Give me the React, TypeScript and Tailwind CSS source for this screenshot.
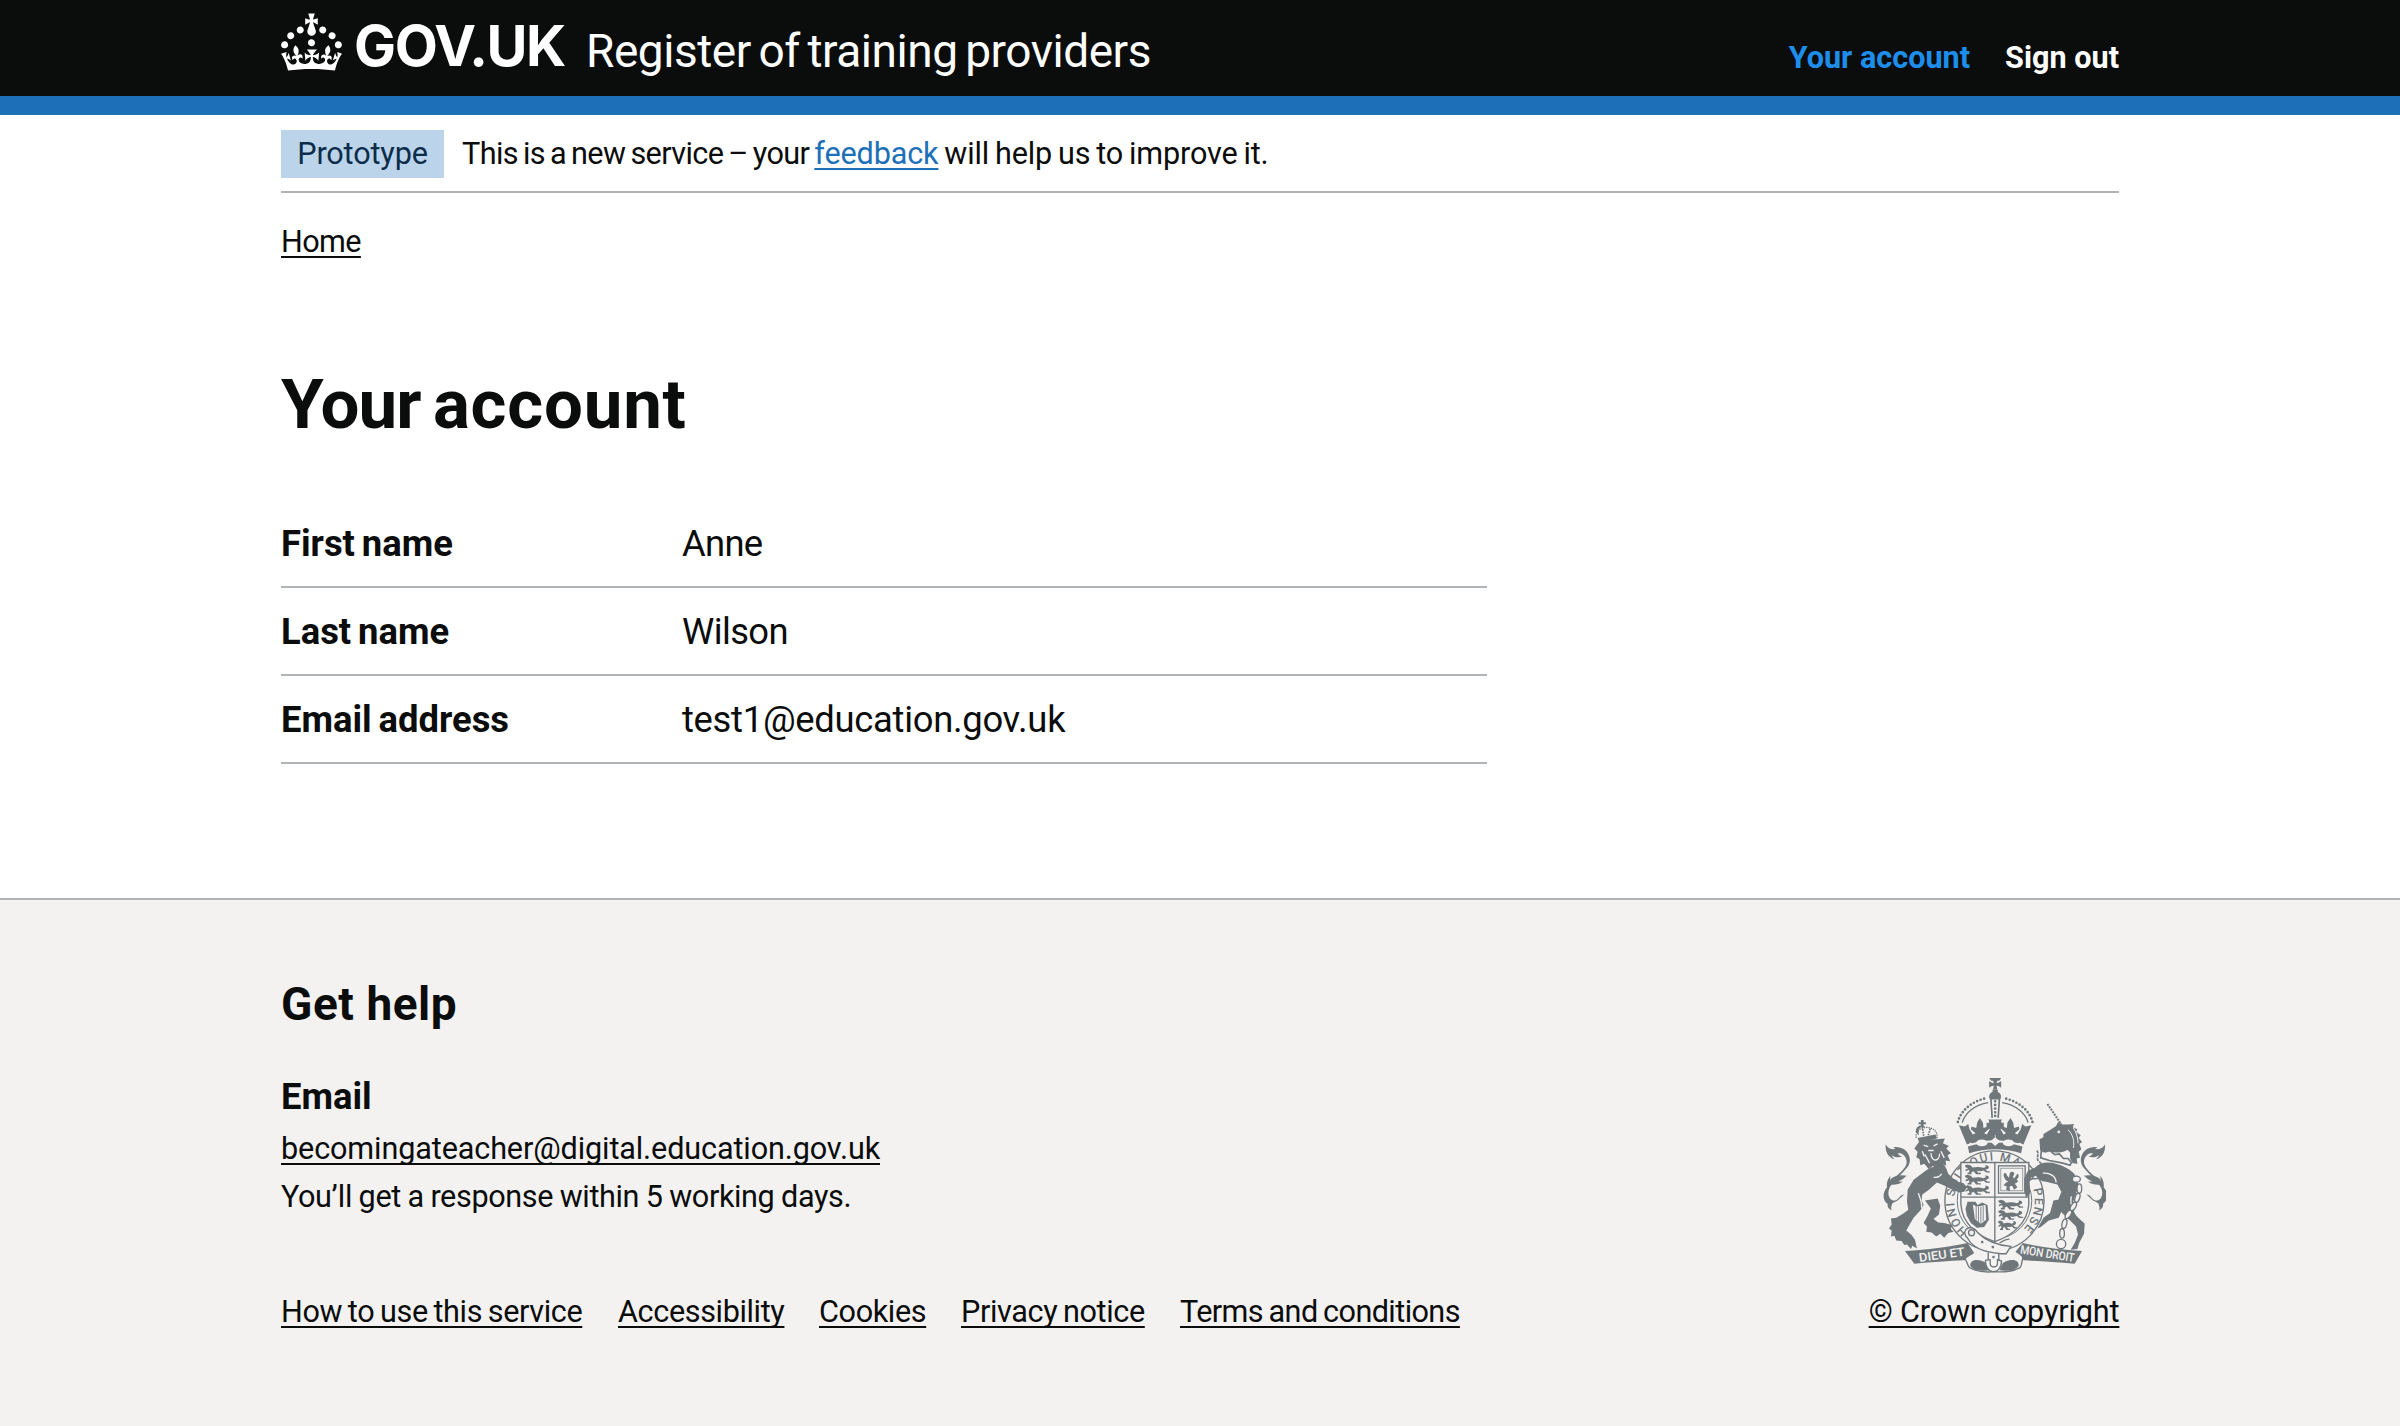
import type { ReactNode } from "react";

const ROWS = [
  { label: "First name", value: "Anne", tracking: "tracking-[-0.02em]" },
  { label: "Last name", value: "Wilson", tracking: "tracking-[-0.017em]" },
  { label: "Email address", value: "test1@education.gov.uk", tracking: "tracking-[-0.008em]" },
];

const FOOTER_LINKS = [
  { text: "How to use this service", width: "w-[302px]" },
  { text: "Accessibility", width: "w-[166px]" },
  { text: "Cookies", width: "w-[107px]" },
  { text: "Privacy notice", width: "w-[184px]" },
  { text: "Terms and conditions", width: "w-[280px] tracking-[-0.019em]" },
];

function Link({ children, className = "" }: { children: ReactNode; className?: string }) {
  return (
    <a
      href="#"
      className={`underline decoration-2 underline-offset-[4px] [text-decoration-skip-ink:none] ${className}`}
    >
      {children}
    </a>
  );
}

function CrownLogo() {
  return (
    <svg viewBox="0 0 32 30" className="mt-[13px] h-[58px] w-[61px] shrink-0" fill="currentColor" aria-hidden="true">
      <path d="M22.6 10.4c-1 .4-2-.1-2.4-1-.4-.9.1-2 1-2.4.9-.4 2 .1 2.4 1s-.1 2-1 2.4m-5.9 6.7c-.9.4-2-.1-2.4-1-.4-.9.1-2 1-2.4.9-.4 2 .1 2.4 1s-.1 2-1 2.4m10.8-3.7c-1 .4-2-.1-2.4-1-.4-.9.1-2 1-2.4.9-.4 2 .1 2.4 1s0 2-1 2.4m3.3 4.8c-1 .4-2-.1-2.4-1-.4-.9.1-2 1-2.4.9-.4 2 .1 2.4 1s-.1 2-1 2.4M17 4.7l2.3 1.2V2.5l-2.3.7-.2-.2.9-3h-3.4l.9 3-.2.2c-.1.1-2.3-.7-2.3-.7v3.4L15 4.7c.1.1.1.2.2.2l-1.3 4c-.1.2-.1.4-.1.6 0 1.1.8 2 1.9 2.2h.7c1-.2 1.9-1.1 1.9-2.1 0-.2 0-.4-.1-.6l-1.3-4c-.1-.2 0-.2.1-.3m-7.6 5.7c.9.4 2-.1 2.4-1 .4-.9-.1-2-1-2.4-.9-.4-2 .1-2.4 1s0 2 1 2.4m-5 3c.9.4 2-.1 2.4-1 .4-.9-.1-2-1-2.4-.9-.4-2 .1-2.4 1s.1 2 1 2.4m-3.2 4.8c.9.4 2-.1 2.4-1 .4-.9-.1-2-1-2.4-.9-.4-2 .1-2.4 1s0 2 1 2.4m14.8 11c4.4 0 8.6.3 12.3.8 1.1-4.5 2.4-7 3.7-8.8l-2.5-.9c.2 1.3.3 1.9 0 2.7-.4-.4-.8-1.1-1.1-2.3l-1.2 4c.7-.5 1.3-.8 2-.9-1.1 2.5-2.6 3.1-3.5 3-1.1-.2-1.7-1.2-1.5-2.1.3-1.2 1.5-1.5 2.1-.1 1.1-2.3-.8-3-2-2.3 1.9-1.9 2.1-3.5.6-5.6-2.1 1.6-2.1 3.2-1.2 5.5-1.2-1.4-3.2-.6-2.5 1.6.9-1.4 2.1-.5 1.9.8-.2 1.1-1.7 2.1-3.5 1.9-2.7-.2-2.9-2.1-2.9-3.6.7-.1 1.9.5 2.9 1.9l.4-4.3c-1.1 1.1-2.1 1.4-3.2 1.4.4-1.2 2.1-3 2.1-3h-5.4s1.7 1.9 2.1 3c-1.1 0-2.1-.2-3.2-1.4l.4 4.3c1-1.4 2.2-2 2.9-1.9-.1 1.5-.2 3.4-2.9 3.6-1.9.2-3.4-.8-3.5-1.9-.2-1.3 1-2.2 1.9-.8.7-2.3-1.2-3-2.5-1.6.9-2.2.9-3.9-1.2-5.5-1.5 2-1.3 3.7.6 5.6-1.2-.7-3.1 0-2 2.3.6-1.4 1.8-1.1 2.1.1.2.9-.3 1.9-1.5 2.1-.9.2-2.4-.5-3.5-3 .6 0 1.2.3 2 .9l-1.2-4c-.3 1.1-.7 1.9-1.1 2.3-.3-.8-.2-1.4 0-2.7l-2.9.9C1.3 23 2.6 25.5 3.7 30c3.7-.5 7.9-.8 12.3-.8" />
    </svg>
  );
}

/* One walking lion of the English quarters, 80 by 28 units. */
function PassantLion({ x, y }: { x: number; y: number }) {
  return (
    <path
      transform={`translate(${x} ${y})`}
      d="M2 3l8-3 10 3 5 6c12-3 24-2 32 1 8-1 9-5 6-8 8 0 14 4 10 9-3 3-8 4-10 5l8 4 6 0v4H66l-8-6c-8 3-14 2-20 1l4 6h8v4H36l-8-9-6 3v6H10v-4l6-2-2-7-10 4 0-5 8-4-8-3z"
      fill="currentColor"
    />
  );
}

/* Parts of the crown that sit left of the centre line; drawn twice, once mirrored. */
function CrownHalf() {
  return (
    <g>
      <path d="M295 184C303 150 340 120 380 113" fill="none" stroke="currentColor" strokeWidth="8" strokeLinecap="round" strokeDasharray="0 11" />
      <path d="M308 186C316 158 346 132 386 126" fill="none" stroke="currentColor" strokeWidth="4" />
      <path d="M394 112L398 172" stroke="currentColor" strokeWidth="5" />
      <path d="M298 194l18 4 10-8 4 16 10 16 8-4-14-12 2-8 14 4 3-16 8-14 9 14 2 16 13-4 2 8-13 12 8 4 10-18-8-12 8-14h14v60c-32 2-60 6-84 14z" fill="currentColor" />
      <path d="M324 252l10-6 8 8-10 8z" fill="#f3f2f1" />
    </g>
  );
}

function Limbs() {
  return (
    <g fill="currentColor">
      {/* tail */}
      <path d="M78 252c8 14 20 16 30 12l-8-4c14-2 30 2 38 10 14 14 18 34 4 52-16 20-46 44-54 64-6 20 4 36 18 34 12-2 14-18 28-18l-20 18-16 8c-2 8-6 14-2 22-10-4-14-12-12-20-16-10-16-34-2-50-2-12 2-24 10-34 0 6-2 12 0 18 18-20 40-32 48-52 4-14-4-30-18-34l-8 0c4 6 8 8 14 10-12 4-24 2-32-4 2 6 6 8 8 12-14-4-28-18-26-44z" />
      <path d="M92 356c12-10 30-14 50-10-10 6-14 14-26 16 6 2 10 2 14 0-10 10-28 12-40 10z" />
    </g>
  );
}

function RoyalArms() {
  return (
    <svg viewBox="70 50 670 590" className="h-[197px] w-[223px] text-[#6f777b]" aria-hidden="true">
      <defs>
        <path id="garter" d="M326 513A121 121 0 1 1 484 513" />
      </defs>

      {/* garter */}
      <ellipse cx="405" cy="421" rx="149" ry="150" fill="#f3f2f1" stroke="currentColor" strokeWidth="4" />
      <ellipse cx="405" cy="421" rx="112" ry="114" fill="none" stroke="currentColor" strokeWidth="3" />
      <text fill="currentColor" fontSize="36" fontFamily="Roboto, sans-serif" fontWeight="500">
        <textPath href="#garter" textLength="575">HONI SOIT QUI MAL Y PENSE</textPath>
      </text>

      {/* crown */}
      <CrownHalf />
      <g transform="matrix(-1 0 0 1 814 0)">
        <CrownHalf />
      </g>
      <path d="M389 52h36l-6 8h-5l-3 7 6-1 8-5v20l-8-5-6-1 3 12h-14l3-12-6 1-8 5V61l8 5 6 1-3-7h-5z" fill="currentColor" />
      <path d="M398 88h18l-2 5c14 6 12 20 6 24h-27c-6-6-7-18 7-24z" fill="currentColor" />
      <path d="M407 122v50" stroke="currentColor" strokeWidth="8" strokeLinecap="round" strokeDasharray="0 11" />
      <path d="M386 177h42l-9 14 14-5v22l-15-5-4 20h-14l-4-20-15 5v-22l14 5z" fill="currentColor" />
      <path d="M325 258c50-16 114-16 164 0l-4 20c-50-16-106-16-156 0z" fill="currentColor" />
      <ellipse cx="367" cy="247" rx="17" ry="10" fill="#f3f2f1" />
      <ellipse cx="447" cy="247" rx="17" ry="10" fill="#f3f2f1" />
      <path d="M407 230l15 13-15 13-15-13z" fill="#f3f2f1" />

      {/* shield */}
      <path d="M304 306h204v126c-4 54-46 92-102 112-58-20-98-58-102-112z" fill="#f3f2f1" stroke="currentColor" strokeWidth="4" />
      <path d="M406 306v238M304 410h204" stroke="currentColor" strokeWidth="4" />
      <PassantLion x={314} y={312} />
      <PassantLion x={314} y={343} />
      <PassantLion x={314} y={374} />
      <PassantLion x={414} y={418} />
      <PassantLion x={414} y={449} />
      <g transform="translate(414 480) scale(0.75 1)">
        <PassantLion x={0} y={0} />
      </g>
      <rect x="417" y="316" width="80" height="82" fill="none" stroke="currentColor" strokeWidth="4" />
      <rect x="424" y="323" width="66" height="68" fill="none" stroke="currentColor" strokeWidth="2" />
      <path d="M434 350c-6-12 6-18 8-6l6 8c4-8 0-18 10-18 8 0 8 10 2 14l4 6 10-14c6 4 4 12-2 16l4 8-10 6 8 10-10 8-6-12-8 2 2 14-12-4 2-10-10-4 8-8 6-2-8-6z" fill="currentColor" />
      <path d="M324 424h24l6 10 14-8 16 8 4 44-14 22-22 2-18-14-12-22-4-20z" fill="currentColor" />
      <path d="M340 432c14 10 26 4 38 2l2 44-16 12-18-14z" fill="#f3f2f1" />
      <path d="M350 436v42M357 438v46M364 438v50M371 436v46" stroke="currentColor" strokeWidth="2.5" />

      {/* tails */}
      <Limbs />
      <g transform="matrix(-1 0 0 1 815 0)">
        <Limbs />
      </g>

      {/* lion */}
      <g fill="currentColor">
        <path d="M222 318l20-12c12 2 18 16 24 34l24 22 22 6 10 12-8 14-14 2-22-8-26-14-20-8-24 22-20 14-2 18 6 14-10 16-20 22-14 24-8 14 16 14 10 14 6 26-14-8-4 10-12-14-8 2-8-12-16-2-6-14-10 2 2-18-8-6 8-12-2-18 16-2 20-12 16-12-4-24 2-36 18-30 40-30z" />
        <path d="M196 420l38-6 8 22-4 26-16 14 14 10 18 2 24 6-4 12 8 8-16 4-12 14-12-12-12 8-14-12-16-2 2-16-10-10 12-22 10-22z" />
        <path d="M178 244l14-8h40l24-2-6 14 18 8-8 8 14 14-10 6 8 18-14-2 2 16-16-8-10 14-14-6-12 10-14-16-12 4-2-18-10-6 4-16-10-10z" />
        <path d="M168 214c2-20 16-24 30-14l-10-1c-12 2-12 10-10 26zM174 232l54-10 4 12-54 10zM184 178h8v7h7v6h-7v9h-8v-9h-7v-6h7z" />
      </g>
      <path d="M170 232c-6-34 50-44 62-12v12" fill="none" stroke="currentColor" strokeWidth="4" strokeDasharray="4 3" />
      <path d="M188 198l4 28M212 204l-6 20" stroke="currentColor" strokeWidth="5" strokeDasharray="5 3" />
      <path d="M192 254l14 4M222 256l12-6M206 270h16M214 278c2 30 26 24 26 2M196 282l14 26M188 272l6 16M244 272l10 20" fill="none" stroke="#f3f2f1" strokeWidth="4" />
      <path d="M176 398c6 16 12 30 10 44M246 340c-4 10-18 12-24 10" fill="none" stroke="#f3f2f1" strokeWidth="4" />

      {/* unicorn */}
      <g fill="currentColor">
        <path d="M564 130l42 62" stroke="currentColor" strokeWidth="6" strokeDasharray="6 3" />
        <path d="M540 236l12-6 0-10 20-12 18-12 6-12 12 8 18 0 18-2-4 10 14 6-4 8 14 10-6 8 10 12-8 6 6 16-8 8 4 18-10 2 2 16-14-2-8-14 0-18-8-8c-16 12-36 8-56 4l-16 4-10-8z" />
        <path d="M546 264l12 10 14-4 14 12 14-2 12 14 14 0 10 12-4 8-22-6-40-8-26-8z" fill="none" stroke="currentColor" strokeWidth="5" />
        <path d="M526 322c22-24 60-18 94 0 34 18 40 40 34 66-8 26-18 38-10 66 6 16 24 26 32 36l-2 30-14 26-6 20-20 2 12-20 10-26-6-24-24-24-18-16c-10-14-14-26-10-44l8-20-12-22-34-8c-14 0-24-8-30-18l-14 4-6 14 2 34-12 14-6-22 0-36 12-24z" />
        <path d="M582 420l34-6-6 30-12 28-30 8-24 20-10 4 18-32 20-14z" />
      </g>
      <path d="M550 338c20-2 40 8 40 28M560 396c16-8 14-14 28-18M636 408c-4 14-2 20 2 32" fill="none" stroke="#f3f2f1" strokeWidth="4" />
      <circle cx="598" cy="214" r="4" fill="#f3f2f1" />
      <path d="M626 208c14 12 20 34 16 54M642 202c8 12 14 30 14 46" fill="none" stroke="#f3f2f1" strokeWidth="3" />
      <path d="M532 270c10 10-6 26 8 34s-8 14-6 22" fill="none" stroke="currentColor" strokeWidth="5" strokeDasharray="9 3" />
      {/* chain */}
      <g fill="#f3f2f1" stroke="currentColor" strokeWidth="4">
        <ellipse cx="651" cy="356" rx="12" ry="9" />
        <ellipse cx="660" cy="384" rx="7" ry="14" />
        <ellipse cx="654" cy="412" rx="7" ry="14" transform="rotate(18 654 412)" />
        <ellipse cx="642" cy="438" rx="7" ry="14" transform="rotate(30 642 438)" />
        <ellipse cx="627" cy="462" rx="7" ry="14" transform="rotate(32 627 462)" />
        <ellipse cx="615" cy="490" rx="7" ry="14" transform="rotate(14 615 490)" />
        <ellipse cx="608" cy="519" rx="7" ry="14" />
        <circle cx="605" cy="551" r="14" />
      </g>

      {/* garter strap and buckle */}
      <path d="M320 506c12-8 26-4 34 10 22 22 52 38 100 42l-14 22-16 0c-50-4-86-20-98-44-10-10-14-20-6-30z" fill="#f3f2f1" stroke="currentColor" strokeWidth="4" />
      <circle cx="336" cy="517" r="9" fill="none" stroke="currentColor" strokeWidth="4" />
      <circle cx="368" cy="545" r="4" fill="currentColor" />
      <circle cx="400" cy="560" r="4" fill="currentColor" />
      <path d="M420 548c12-8 18-12 30-12M386 576v36M418 580v28" fill="none" stroke="currentColor" strokeWidth="4" />

      {/* motto scroll */}
      <path d="M136 572c70-4 130-12 188-24l20 30c-14 10-26 14-28 22-50 2-100 6-152 10z" fill="currentColor" />
      <path d="M668 572c-66-4-124-12-178-24l-22 26c10 8 22 14 24 26 46 2 94 6 154 10z" fill="currentColor" />
      <path d="M312 590c10 6 8 20 18 32 26 14 56 14 76 12 26 2 54 0 76-12 8-12 4-26 10-32" fill="none" stroke="currentColor" strokeWidth="4" />
      <path d="M332 616c0-22 30-20 48-8l12 22c-20 4-52 0-60-14zM478 616c0-22-30-20-48-8l-10 22c20 4 50 0 58-14z" fill="currentColor" />
      <path d="M378 600c-2 44 48 46 48 2l-12-4v10c0 16-22 16-22 0v-10z" fill="#f3f2f1" stroke="currentColor" strokeWidth="4" />
      <circle cx="402" cy="590" r="4" fill="currentColor" />
      <g fill="#f3f2f1" fontFamily="Roboto, sans-serif" fontWeight="500" fontSize="36">
        <text transform="translate(180 605) rotate(-8)" textLength="138" lengthAdjust="spacingAndGlyphs">DIEU ET</text>
        <text transform="translate(481 579) rotate(9)" textLength="164" lengthAdjust="spacingAndGlyphs">MON DROIT</text>
      </g>
    </svg>
  );
}

export default function App() {
  return (
    <div className="flex min-h-[1426px] flex-col bg-white font-[Roboto,sans-serif] text-[30.6px] leading-[38px] tracking-[-0.012em] text-[#0b0c0c]">
      <header className="h-[115px] border-b-[19px] border-[#1d70b8] bg-[#0b0c0c] text-white">
        <div className="mx-auto flex w-[1838px] items-start whitespace-nowrap">
          <CrownLogo />
          <span className="mt-[18px] ml-[12px] w-[210px] font-[Inter,sans-serif] text-[56px] leading-[57px] font-bold tracking-[-0.025em]">
            GOV.UK
          </span>
          <span className="mt-[28px] ml-[22px] text-[46px] leading-[46px] tracking-[-0.01em] [word-spacing:-0.072em]">
            Register of training providers
          </span>
          <nav className="mt-[39px] ml-auto flex gap-[35px] font-bold tracking-normal">
            <a href="#" className="text-[#1d8feb]">Your account</a>
            <a href="#">Sign out</a>
          </nav>
        </div>
      </header>

      <div className="mx-auto w-[1838px]">
        <div className="flex h-[78px] items-start border-b-2 border-[#b1b4b6] pt-[15px] leading-[48px] whitespace-nowrap">
          <strong className="mr-[18px] h-[48px] w-[163px] bg-[#bbd4ea] text-center font-normal tracking-[-0.005em] text-[#0c2d4a]">
            Prototype
          </strong>
          <span className="tracking-[-0.005em] [word-spacing:-0.05em]">
            <span className="tracking-[-0.02em] [word-spacing:-0.063em]">This is a new service – your </span>
            <Link className="text-[#1d70b8]">feedback</Link> will help us to improve it.
          </span>
        </div>
        <nav className="mt-[30px] h-[37px] tracking-[-0.02em]">
          <Link>Home</Link>
        </nav>

        <main>
          <h1 className="mt-[106px] text-[69px] leading-[77px] font-bold tracking-[0.011em] [word-spacing:-0.055em]">
            <span className="tracking-[-0.014em]">Your </span>account
          </h1>
          <dl className="mt-[57px] w-[1206px] text-[36.4px] leading-[48px]">
            {ROWS.map((row) => (
              <div key={row.label} className="flex border-b-2 border-[#b1b4b6] pt-[20px] pb-[18px]">
                <dt className="w-[401px] font-bold tracking-normal [word-spacing:-0.06em]">{row.label}</dt>
                <dd className={row.tracking}>{row.value}</dd>
              </div>
            ))}
          </dl>
        </main>
      </div>

      <footer className="mt-[134px] flex-1 border-t-2 border-[#b1b4b6] bg-[#f3f2f1]">
        <div className="mx-auto flex w-[1838px] items-end justify-between whitespace-nowrap">
          <div>
            <h2 className="mt-[75px] text-[46px] leading-[58px] font-bold tracking-[0.012em]">Get help</h2>
            <h3 className="mt-[40px] text-[36.4px] leading-[48px] font-bold tracking-normal">Email</h3>
            <div className="mt-[4px] leading-[48px]">
              <p className="tracking-[-0.004em]">
                <Link>becomingateacher@digital.education.gov.uk</Link>
              </p>
              <p className="[word-spacing:-0.02em]">You’ll get a response within 5 working days.</p>
            </div>
            <ul className="mt-[72px] flex gap-[35px] [word-spacing:-0.05em]">
              {FOOTER_LINKS.map((link) => (
                <li key={link.text} className={link.width}>
                  <Link>{link.text}</Link>
                </li>
              ))}
            </ul>
          </div>
          <div className="flex w-[250px] flex-col items-center">
            <RoyalArms />
            <Link className="mt-[19px] tracking-[-0.005em]">© Crown copyright</Link>
          </div>
        </div>
      </footer>
    </div>
  );
}
